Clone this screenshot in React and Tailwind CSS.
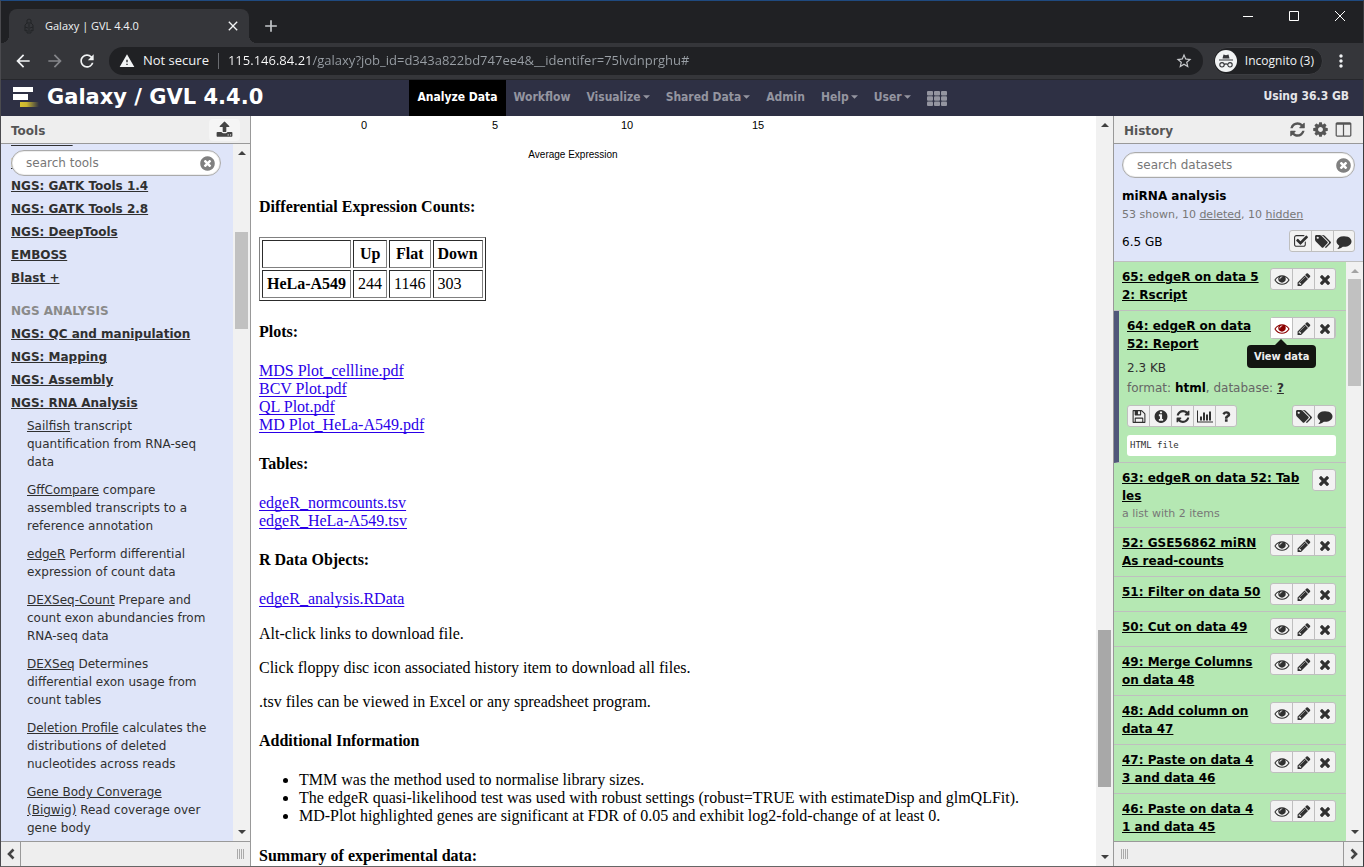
import { MdArrowBack, MdArrowForward, MdRefresh, MdStarBorder, MdMoreVert, MdWarning, MdClose, MdAdd } from "react-icons/md";

const ICONS = {
  eye: "M1664 960q-152-236-381-353 61 104 61 225 0 185-131.5 316.5t-316.5 131.5-316.5-131.5-131.5-316.5q0-121 61-225-229 117-381 353 133 205 333.5 326.5t434.5 121.5 434.5-121.5 333.5-326.5zm-720-384q0-20-14-34t-34-14q-125 0-214.5 89.5t-89.5 214.5q0 20 14 34t34 14 34-14 14-34q0-86 61-147t147-61q20 0 34-14t14-34zm848 384q0 34-20 69-140 230-376.5 368.5t-499.5 138.5-499.5-139-376.5-368q-20-35-20-69t20-69q140-229 376.5-368t499.5-139 499.5 139 376.5 368q20 35 20 69z",
  pencil: "M491 1536l91-91-235-235-91 91v107h128v128h107zm523-928q0-22-22-22-10 0-17 7l-542 542q-7 7-7 17 0 22 22 22 10 0 17-7l542-542q7-7 7-17zm-54-192l416 416-832 832h-416v-416zm683 96q0 53-37 90l-166 166-416-416 166-165q36-38 90-38 53 0 91 38l235 234q37 39 37 91z",
  times: "M1490 1322q0 40-28 68l-136 136q-28 28-68 28t-68-28l-294-294-294 294q-28 28-68 28t-68-28l-136-136q-28-28-28-68t28-68l294-294-294-294q-28-28-28-68t28-68l136-136q28-28 68-28t68 28l294 294 294-294q28-28 68-28t68 28l136 136q28 28 28 68t-28 68l-294 294 294 294q28 28 28 68z",
  refresh: "M1639 1056q0 5-1 7-64 268-268 434.5t-478 166.5q-146 0-282.5-55t-243.5-157l-129 129q-19 19-45 19t-45-19-19-45v-448q0-26 19-45t45-19h448q26 0 45 19t19 45-19 45l-137 137q71 66 161 102t187 36q134 0 250-65t186-179q11-17 53-117 8-23 30-23h192q13 0 22.5 9.5t9.5 22.5zm25-800v448q0 26-19 45t-45 19h-448q-26 0-45-19t-19-45 19-45l138-138q-148-137-349-137-134 0-250 65t-186 179q-11 17-53 117-8 23-30 23h-199q-13 0-22.5-9.5t-9.5-22.5v-7q65-268 270-434.5t480-166.5q146 0 284 55.5t245 156.5l130-129q19-19 45-19t45 19 19 45z",
  cog: "M1152 896q0-106-75-181t-181-75-181 75-75 181 75 181 181 75 181-75 75-181zm512-109v222q0 12-8 23t-20 13l-185 28q-19 54-39 91 35 50 107 138 10 12 10 25t-9 23q-27 37-99 108t-94 71q-12 0-26-9l-138-108q-44 23-91 38-16 136-29 186-7 28-36 28h-222q-14 0-24.5-8.5t-11.5-21.5l-28-184q-49-16-90-37l-141 107q-10 9-25 9-14 0-25-11-126-114-165-168-7-10-7-23 0-12 8-23 15-21 51-66.5t54-70.5q-27-50-41-99l-183-27q-13-2-21-12.5t-8-23.5v-222q0-12 8-23t19-13l186-28q14-46 39-92-40-57-107-138-10-12-10-24 0-10 9-23 26-36 98.5-107.5t94.5-71.5q13 0 26 10l138 107q44-23 91-38 16-136 29-186 7-28 36-28h222q14 0 24.5 8.5t11.5 21.5l28 184q49 16 90 37l142-107q9-9 24-9 13 0 25 10 129 119 165 170 7 8 7 22 0 12-8 23-15 21-51 66.5t-54 70.5q26 50 41 98l183 28q13 2 21 12.5t8 23.5z",
  columns: "M224 1536h608v-1152h-640v1120q0 13 9.5 22.5t22.5 9.5zm1376-32v-1120h-640v1152h608q13 0 22.5-9.5t9.5-22.5zm128-1216v1216q0 66-47 113t-113 47h-1344q-66 0-113-47t-47-113v-1216q0-66 47-113t113-47h1344q66 0 113 47t47 113z",
  tags: "M448 448q0-53-37.5-90.5t-90.5-37.5-90.5 37.5-37.5 90.5 37.5 90.5 90.5 37.5 90.5-37.5 37.5-90.5zm1067 576q0 53-37 90l-491 492q-39 37-91 37-53 0-90-37l-715-716q-38-37-64.5-101t-26.5-117v-416q0-52 38-90t90-38h416q53 0 117 26.5t102 64.5l715 714q37 39 37 91zm384 0q0 53-37 90l-491 492q-39 37-91 37-36 0-59-14t-53-45l470-470q37-37 37-90 0-52-37-91l-715-714q-38-38-102-64.5t-117-26.5h224q53 0 117 26.5t102 64.5l715 714q37 39 37 91z",
  comment: "M1792 896q0 174-120 321.5t-326 233-450 85.5q-70 0-145-8-198 175-460 242-49 14-114 22-17 2-30.5-9t-17.5-29v-1q-3-4-.5-12t2-10 4.5-9.5l6-9 7-8.5 8-9q7-8 31-34.5t34.5-38 31-39.5 32.5-51 27-59 26-76q-157-89-247.5-220t-90.5-281q0-130 71-248.5t191-204.5 286-136.5 348-50.5q244 0 450 85.5t326 233 120 321.5z",
  check: "M1472 930v318q0 119-84.5 203.5t-203.5 84.5h-832q-119 0-203.5-84.5t-84.5-203.5v-832q0-119 84.5-203.5t203.5-84.5h832q63 0 117 25 15 7 18 23 3 17-9 29l-49 49q-10 10-23 10-3 0-9-2-23-6-45-6h-832q-66 0-113 47t-47 113v832q0 66 47 113t113 47h832q66 0 113-47t47-113v-254q0-13 9-22l64-64q10-10 23-10 6 0 12 3 20 8 20 29zm231-489l-814 814q-24 24-57 24t-57-24l-430-430q-24-24-24-57t24-57l110-110q24-24 57-24t57 24l263 263 647-647q24-24 57-24t57 24l110 110q24 24 24 57t-24 57z",
  save: "M512 1536h768v-384h-768v384zm896 0h128v-896q0-14-10-38.5t-20-34.5l-281-281q-10-10-34-20t-39-10v416q0 40-28 68t-68 28h-576q-40 0-68-28t-28-68v-416h-128v1280h128v-416q0-40 28-68t68-28h832q40 0 68 28t28 68v416zm-384-928v-320q0-13-9.5-22.5t-22.5-9.5h-192q-13 0-22.5 9.5t-9.5 22.5v320q0 13 9.5 22.5t22.5 9.5h192q13 0 22.5-9.5t9.5-22.5zm640 32v928q0 40-28 68t-68 28h-1344q-40 0-68-28t-28-68v-1344q0-40 28-68t68-28h928q40 0 88 20t76 48l280 280q28 28 48 76t20 88z",
  info: "M1152 1376v-160q0-14-9-23t-23-9h-96v-512q0-14-9-23t-23-9h-320q-14 0-23 9t-9 23v160q0 14 9 23t23 9h96v320h-96q-14 0-23 9t-9 23v160q0 14 9 23t23 9h448q14 0 23-9t9-23zm-128-896v-160q0-14-9-23t-23-9h-192q-14 0-23 9t-9 23v160q0 14 9 23t23 9h192q14 0 23-9t9-23zm640 416q0 209-103 385.5t-279.5 279.5-385.5 103-385.5-103-279.5-279.5-103-385.5 103-385.5 279.5-279.5 385.5-103 385.5 103 279.5 279.5 103 385.5z",
  chart: "M640 896v512h-256v-512h256zm384-512v1024h-256v-1024h256zm1024 1152v128h-2048v-1536h128v1408h1920zm-640-896v768h-256v-768h256zm384-384v1152h-256v-1152h256z",
  question: "M1088 1256v240q0 16-12 28t-28 12h-240q-16 0-28-12t-12-28v-240q0-16 12-28t28-12h240q16 0 28 12t12 28zm316-600q0 54-15.5 101t-35 76.5-55 59.5-57.5 43.5-61 35.5q-41 23-68.5 65t-27.5 67q0 17-12 32.5t-28 15.5h-240q-15 0-25.5-18.5t-10.5-37.5v-45q0-83 65-156.5t143-108.5q59-27 84-56t25-76q0-42-46.5-74t-107.5-32q-65 0-108 29-35 25-107 115-13 16-31 16-12 0-25-8l-164-125q-13-10-15.5-25t5.5-28q160-266 464-266 80 0 161 31t146 83 106 127.5 41 158.5z",
  upload: "M1344 1472q0-26-19-45t-45-19-45 19-19 45 19 45 45 19 45-19 19-45zm256 0q0-26-19-45t-45-19-45 19-19 45 19 45 45 19 45-19 19-45zm128-224v320q0 40-28 68t-68 28h-1472q-40 0-68-28t-28-68v-320q0-40 28-68t68-28h427q21 56 70.5 92t110.5 36h256q61 0 110.5-36t70.5-92h427q40 0 68 28t28 68zm-325-648q-17 40-59 40h-256v448q0 26-19 45t-45 19h-256q-26 0-45-19t-19-45v-448h-256q-42 0-59-40-17-39 14-69l448-448q18-19 45-19t45 19l448 448q31 30 14 69z",
  clear: "M1277 1122q0-26-19-45l-181-181 181-181q19-19 19-45 0-27-19-46l-90-90q-19-19-46-19-26 0-45 19l-181 181-181-181q-19-19-45-19-27 0-46 19l-90 90q-19 19-19 46 0 26 19 45l181 181-181 181q-19 19-19 45 0 27 19 46l90 90q19 19 46 19 26 0 45-19l181-181 181 181q19 19 45 19 27 0 46-19l90-90q19-19 19-46zm387-226q0 209-103 385.5t-279.5 279.5-385.5 103-385.5-103-279.5-279.5-103-385.5 103-385.5 279.5-279.5 385.5-103 385.5 103 279.5 279.5 103 385.5z",
};

const WIDE = { tags: "0 0 1900 1792", chart: "0 0 2048 1792" };

function Icon({ name, className = "size-4" }) {
  return (
    <svg viewBox={WIDE[name] || "0 0 1792 1792"} className={className} fill="currentColor" aria-hidden="true">
      <path d={ICONS[name]} />
    </svg>
  );
}

function IconGroup({ items, children }) {
  return (
    <div className="relative flex h-[22px] shrink-0 self-start divide-x divide-[#bfbfbf] rounded-[3px] border border-[#bfbfbf] bg-[#f2f2f2] text-[#303030]">
      {items.map(([icon, label, tone]) => (
        <button
          key={label}
          type="button"
          aria-label={label}
          className={`flex w-[22px] items-center justify-center ${items.length === 1 ? "w-5" : "last-of-type:w-5"} ${tone || ""}`}
        >
          <Icon name={icon} className="h-[15px] w-4 shrink-0" />
        </button>
      ))}
      {children}
    </div>
  );
}

function Triangle({ up, className = "h-1 w-2 fill-[#404040]" }) {
  return (
    <svg viewBox="0 0 8 4" className={`shrink-0 ${className}`} aria-hidden="true">
      <path d={up ? "M0 4 4 0 8 4Z" : "M0 0 4 4 8 0Z"} />
    </svg>
  );
}

function Scrollbar({ before, size, after, thumb = "bg-[#c1c1c1]", upTone }) {
  return (
    <div className="flex w-[17px] shrink-0 flex-col items-center justify-between bg-[#f1f1f1] py-[7px]">
      <Triangle up className={upTone} />
      <div className="flex w-[13px] flex-1 flex-col py-[6px]">
        <div style={{ flexGrow: before }} />
        <div className={thumb} style={{ flexGrow: size }} />
        <div style={{ flexGrow: after }} />
      </div>
      <Triangle />
    </div>
  );
}

function SearchBox({ id, label, end = "pr-1" }) {
  return (
    <div className={`flex h-[26px] items-center rounded-full border border-[#aaa] bg-white pl-3.5 shadow-[inset_0_0_0_1px_#eee] ${end}`}>
      <label htmlFor={id} className="sr-only">{label}</label>
      <input
        id={id}
        type="text"
        placeholder={label}
        className="min-w-0 flex-1 bg-transparent text-[12px] text-[#333] outline-none placeholder:text-[#777]"
      />
      <button type="button" aria-label={`Clear ${label}`} className="text-[#808080]">
        <Icon name="clear" className="size-[17px]" />
      </button>
    </div>
  );
}

function BrowserChrome() {
  return (
    <header className="shrink-0 font-['Open_Sans','Noto_Sans',sans-serif]">
      <div className="flex h-[42px] bg-[#202124] pl-2">
        <div className="relative mt-2 flex w-60 items-center rounded-t-lg bg-[#35363a] pr-2 pl-3 text-[#f1f3f4]">
          <span className="absolute bottom-0 -left-2 size-2 bg-[radial-gradient(circle_at_top_left,transparent_8px,#35363a_8px)]" />
          <span className="absolute -right-2 bottom-0 size-2 bg-[radial-gradient(circle_at_top_right,transparent_8px,#35363a_8px)]" />
          <svg viewBox="0 0 16 16" className="mr-2 size-4 fill-none stroke-[#232427]" aria-hidden="true">
            <path d="M6 5V2l2-1 2 1v3l2 2v6l-2-1v3H6v-3l-2 1V7ZM6 5h4M8 6v8M4 9l3 1M12 9l-3 1" />
          </svg>
          <span className="flex-1 text-[11px]">Galaxy | GVL 4.4.0</span>
          <button type="button" aria-label="Close tab"><MdClose className="size-4" /></button>
        </div>
        <button type="button" aria-label="New tab" className="mt-2 ml-3 text-[#c4c7ca]"><MdAdd className="size-5" /></button>
        <div className="ml-auto flex h-[29px] items-center text-white">
          <button type="button" aria-label="Minimize" className="flex w-[46px] justify-center">
            <svg viewBox="0 0 10 10" className="size-2.5 stroke-current"><path d="M0 5.5h10" /></svg>
          </button>
          <button type="button" aria-label="Maximize" className="flex w-[46px] justify-center">
            <svg viewBox="0 0 10 10" className="size-2.5 fill-none stroke-current"><path d="M.5.5h9v9h-9Z" /></svg>
          </button>
          <button type="button" aria-label="Close" className="flex w-[46px] justify-center">
            <svg viewBox="0 0 10 10" className="size-2.5 fill-none stroke-current"><path d="m0 0 10 10M10 0 0 10" /></svg>
          </button>
        </div>
      </div>
      <div className="flex h-9 items-center bg-[#35363a] px-3 text-[#f1f3f4]">
        <button type="button" aria-label="Back"><MdArrowBack className="size-5" /></button>
        <button type="button" aria-label="Forward" className="ml-3 text-[#85868a]"><MdArrowForward className="size-5" /></button>
        <button type="button" aria-label="Reload" className="ml-3"><MdRefresh className="size-5" /></button>
        <div className="ml-3 flex h-7 flex-1 items-center rounded-full bg-[#202124] px-2.5 text-[13px]">
          <MdWarning className="size-4" />
          <span className="ml-2">Not secure</span>
          <span className="mx-[9px] h-4 w-px bg-[#6a6c70]" />
          <label htmlFor="address" className="sr-only">Address</label>
          <input
            id="address"
            type="text"
            spellCheck="false"
            defaultValue="115.146.84.21/galaxy?job_id=d343a822bd747ee4&__identifer=75lvdnprghu#"
            className="min-w-0 flex-1 bg-[linear-gradient(to_right,#fff_84px,#9aa0a6_84px)] bg-clip-text text-transparent outline-none"
          />
          <button type="button" aria-label="Bookmark" className="text-[#c8cacd]"><MdStarBorder className="size-[18px]" /></button>
        </div>
        <button type="button" className="ml-2.5 flex h-7 items-center gap-2 rounded-full border border-[#3c3d41] bg-[#202124] pr-2 pl-px text-[12px]">
          <svg viewBox="0 0 22 22" className="size-[22px]" aria-hidden="true">
            <circle cx="11" cy="11" r="11" fill="#f1f3f4" />
            <path d="M7.5 8.5 8.5 4.6l2.5.6 2.5-.6 1 3.9ZM4 9.5h14v1H4Z" fill="#35363a" />
            <path d="M9.2 14.8a2.2 2.2 0 1 1-4.4 0 2.2 2.2 0 0 1 4.4 0ZM17.2 14.8a2.2 2.2 0 1 1-4.4 0 2.2 2.2 0 0 1 4.4 0ZM9.2 14.4q1.8-1 3.6 0" fill="none" stroke="#35363a" strokeWidth="1.1" />
          </svg>
          Incognito (3)
        </button>
        <button type="button" aria-label="Menu" className="ml-2"><MdMoreVert className="size-5" /></button>
      </div>
      <div className="h-px bg-[#26272b]" />
    </header>
  );
}

const NAV = [
  ["Analyze Data", false],
  ["Workflow", false],
  ["Visualize", true],
  ["Shared Data", true],
  ["Admin", false],
  ["Help", true],
  ["User", true],
];

function Masthead() {
  return (
    <div className="grid h-9 shrink-0 grid-cols-[1fr_auto_1fr] bg-[#2e3044] text-[12px] font-bold">
      <div className="flex items-center gap-2 pb-0.5 pl-3">
        <svg viewBox="0 0 26 22" className="h-[22px] w-[26px]" aria-hidden="true">
          <defs>
            <linearGradient id="brand" x1="0" x2="1">
              <stop offset="0" stopColor="#d8c32f" />
              <stop offset=".35" stopColor="#c9b631" />
              <stop offset="1" stopColor="#2e3044" />
            </linearGradient>
          </defs>
          <path d="M0 1h20v5H0ZM0 8h15v6H0Z" fill="#fff" />
          <path d="M7 16h19v5H7Z" fill="url(#brand)" />
        </svg>
        <span className="text-[21px] leading-8 text-white">Galaxy / GVL 4.4.0</span>
      </div>
      <nav className="flex font-['DejaVu_Sans_Condensed','DejaVu_Sans',sans-serif] text-[#9495a0]">
        {NAV.map(([label, menu]) => (
          <a
            key={label}
            href="#"
            className={`flex items-center gap-0.5 px-2 pb-0.5 ${label === "Analyze Data" ? "bg-black text-white" : ""}`}
          >
            {label}
            {menu && <Triangle className="h-1 w-[7px] fill-[#9495a0]" />}
          </a>
        ))}
        <button type="button" aria-label="Apps" className="px-2">
          <svg viewBox="0 0 20 15" className="h-[15px] w-5 fill-[#9495a0]" aria-hidden="true">
            {[0, 7, 14].map((x) => [0, 5.3, 10.6].map((y) => (
              <rect key={`${x}-${y}`} x={x} y={y} width="6" height="4.4" rx="1" />
            )))}
          </svg>
        </button>
      </nav>
      <span className="self-center justify-self-end pr-3.5 pb-1 font-['DejaVu_Sans_Condensed','DejaVu_Sans',sans-serif] text-[#e6e6ea]">
        Using 36.3 GB
      </span>
    </div>
  );
}

const SECTIONS = ["BEDTools", "NGS: Picard", "NGS: GATK Tools 1.4", "NGS: GATK Tools 2.8", "NGS: DeepTools", "EMBOSS", "Blast +"];
const ANALYSIS = ["NGS: QC and manipulation", "NGS: Mapping", "NGS: Assembly", "NGS: RNA Analysis"];
const TOOLS = [
  ["Sailfish", "transcript quantification from RNA-seq data"],
  ["GffCompare", "compare assembled transcripts to a reference annotation"],
  ["edgeR", "Perform differential expression of count data"],
  ["DEXSeq-Count", "Prepare and count exon abundancies from RNA-seq data"],
  ["DEXSeq", "Determines differential exon usage from count tables"],
  ["Deletion Profile", "calculates the distributions of deleted nucleotides across reads"],
  ["Gene Body Converage (Bigwig)", "Read coverage over gene body"],
];

function Grip() {
  return <div className="flex h-[10px] w-[7px] justify-between">{[0, 1, 2, 3].map((i) => <span key={i} className="w-px bg-[#aaa]" />)}</div>;
}

function Chevron({ left }) {
  return (
    <svg viewBox="0 0 8 12" className="h-3 w-2 fill-none stroke-[#444] stroke-[2.6]" aria-hidden="true">
      <path d={left ? "M6.5 1.5 2 6l4.5 4.5" : "M1.5 1.5 6 6l-4.5 4.5"} />
    </svg>
  );
}

function ToolSection({ label }) {
  return <li className="pb-[5px]"><a href="#" className="font-bold underline">{label}</a></li>;
}

function ToolPanel() {
  return (
    <aside className="flex w-[250px] shrink-0 flex-col border-r border-[#999] bg-[#dfe5f9]">
      <div className="flex h-7 shrink-0 items-center justify-between border-b border-[#999] bg-[#eee] px-2.5">
        <h2 className="pt-0.5 text-[12px] font-bold text-[#555]">Tools</h2>
        <button type="button" aria-label="Upload data" className="flex h-[22px] w-[31px] items-center justify-center rounded bg-[#f5f5f5] text-[#444]">
          <Icon name="upload" className="size-[17px]" />
        </button>
      </div>
      <div className="flex min-h-0 flex-1">
        <div className="relative min-w-0 flex-1 overflow-hidden pl-2.5 text-[12px] leading-[18px] text-[#303030]">
          <ul className="-mt-[13px]">
            {SECTIONS.map((label) => <ToolSection key={label} label={label} />)}
          </ul>
          <h3 className="pt-[10px] pb-[5px] font-bold text-[#8a8a8a]">NGS ANALYSIS</h3>
          <ul>
            {ANALYSIS.map((label) => <ToolSection key={label} label={label} />)}
          </ul>
          <ul className="flex flex-col gap-2.5 pl-4">
            {TOOLS.map(([name, text]) => (
              <li key={name} className="max-w-[184px]"><a href="#" className="underline">{name}</a> {text}</li>
            ))}
          </ul>
          <div className="absolute top-1.5 right-3 left-2.5">
            <SearchBox id="search-tools" label="search tools" />
          </div>
        </div>
        <Scrollbar before={71} size={97} after={495} />
      </div>
      <div className="flex h-[25px] shrink-0 items-center justify-between border-t border-[#999] bg-[#eee] pr-[6px]">
        <button type="button" aria-label="Collapse tools" className="flex h-full w-5 items-center justify-center border-r border-[#999]"><Chevron left /></button>
        <Grip />
      </div>
    </aside>
  );
}

function Heading({ children }) {
  return <h4 className="my-[21px] font-bold">{children}</h4>;
}

function Links({ items }) {
  return (
    <p className="flex flex-col items-start">
      {items.map((item) => (
        <a key={item} href="#" className="text-[#2a00e8] underline decoration-1 underline-offset-2 [text-decoration-skip-ink:none]">{item}</a>
      ))}
    </p>
  );
}

function Report() {
  const cell = "border border-t-[#2c2c2c] border-r-[#808080] border-b-[#808080] border-l-[#2c2c2c] p-1";
  return (
    <main className="flex min-w-0 flex-1">
      <div className="min-w-0 flex-1 overflow-hidden bg-white px-2 font-['Liberation_Serif',serif] text-[16px] leading-[18px] text-black">
        <svg viewBox="0 0 600 61" className="h-[61px] w-[600px]" textAnchor="middle" fontSize="11" fontFamily="Liberation Sans, Arial, sans-serif" role="img" aria-label="Average Expression axis">
          <text x="105" y="13">0</text>
          <text x="236" y="13">5</text>
          <text x="368" y="13">10</text>
          <text x="499" y="13">15</text>
          <text x="314" y="42" fontSize="10">Average Expression</text>
        </svg>
        <Heading>Differential Expression Counts:</Heading>
        <table className="mb-[22px] border-separate border-spacing-[2px] border border-t-[#808080] border-r-[#2c2c2c] border-b-[#2c2c2c] border-l-[#808080]">
          <thead>
            <tr>
              <td className={cell} />
              {["Up", "Flat", "Down"].map((h) => <th key={h} scope="col" className={cell}>{h}</th>)}
            </tr>
          </thead>
          <tbody>
            <tr>
              <th scope="row" className={cell}>HeLa-A549</th>
              {["244", "1146", "303"].map((v) => <td key={v} className={cell}>{v}</td>)}
            </tr>
          </tbody>
        </table>
        <Heading>Plots:</Heading>
        <Links items={["MDS Plot_cellline.pdf", "BCV Plot.pdf", "QL Plot.pdf", "MD Plot_HeLa-A549.pdf"]} />
        <Heading>Tables:</Heading>
        <Links items={["edgeR_normcounts.tsv", "edgeR_HeLa-A549.tsv"]} />
        <Heading>R Data Objects:</Heading>
        <Links items={["edgeR_analysis.RData"]} />
        <div className="mt-[17px] mb-[21px] flex flex-col gap-4">
          <p>Alt-click links to download file.</p>
          <p>Click floppy disc icon associated history item to download all files.</p>
          <p>.tsv files can be viewed in Excel or any spreadsheet program.</p>
        </div>
        <Heading>Additional Information</Heading>
        <ul className="mb-[22px] list-disc pl-10">
          <li>TMM was the method used to normalise library sizes.</li>
          <li>The edgeR quasi-likelihood test was used with robust settings (robust=TRUE with estimateDisp and glmQLFit).</li>
          <li>MD-Plot highlighted genes are significant at FDR of 0.05 and exhibit log2-fold-change of at least 0.</li>
        </ul>
        <Heading>Summary of experimental data:</Heading>
      </div>
      <Scrollbar before={493} size={156} after={61} thumb="bg-[#a8a8a8]" />
    </main>
  );
}

const ACTIONS = [["eye", "View data"], ["pencil", "Edit attributes"], ["times", "Delete"]];

function Title({ lines }) {
  return (
    <a href="#" className="font-bold whitespace-nowrap text-black underline">
      {lines[0]}
      {lines[1] && <><br />{lines[1]}</>}
    </a>
  );
}

function HistoryItem({ lines, actions = ACTIONS, note }) {
  return (
    <li className="flex justify-between border-b border-[#bfbfbf] py-1.5 pr-2.5 pl-2">
      <div>
        <Title lines={lines} />
        {note && <p className="pt-px text-[11px] leading-[15px] text-[#777]">{note}</p>}
      </div>
      <IconGroup items={actions} />
    </li>
  );
}

function ExpandedItem() {
  return (
    <li className="border-b border-l-5 border-b-[#bfbfbf] border-l-[#51577a] py-1.5 pr-2.5 pl-2">
      <div className="flex justify-between">
        <Title lines={["64: edgeR on data", "52: Report"]} />
        <IconGroup items={[["eye", "View data", "bg-white text-[#8b0000]"], ACTIONS[1], ACTIONS[2]]}>
          <div role="tooltip" className="absolute top-[27px] -left-6 rounded bg-[#121511] px-[7px] py-0.5 font-['DejaVu_Sans_Condensed','DejaVu_Sans',sans-serif] text-[11px] leading-[19px] font-bold whitespace-nowrap text-[#eee]">
            <svg viewBox="0 0 12 6" className="absolute -top-1.5 left-7 h-1.5 w-3 fill-[#121511]" aria-hidden="true"><path d="M0 6 6 0l6 6Z" /></svg>
            View data
          </div>
        </IconGroup>
      </div>
      <p className="mt-1.5 text-[#303030]">2.3 KB</p>
      <p className="mt-0.5 text-[#666]">
        format: <b className="text-black">html</b>, database: <a href="#" className="font-bold text-[#303030] underline">?</a>
      </p>
      <div className="mt-2 flex justify-between">
        <IconGroup items={[["save", "Download"], ["info", "View details"], ["refresh", "Run this job again"], ["chart", "Visualize"], ["question", "Help"]]} />
        <IconGroup items={[["tags", "Edit dataset tags"], ["comment", "Edit dataset annotation"]]} />
      </div>
      <pre className="mt-2 rounded-[3px] bg-white px-[3px] font-['DejaVu_Sans_Mono',monospace] text-[9px] leading-[21px] text-[#303030]">HTML file</pre>
    </li>
  );
}

function HistoryPanel() {
  return (
    <aside className="flex w-[250px] shrink-0 flex-col border-l border-[#999] bg-[#dfe5f9] text-[12px] leading-[18px]">
      <div className="flex h-7 shrink-0 items-center gap-1.5 border-b border-[#999] bg-[#eee] pr-[11px] pl-2.5 text-[#555]">
        <h2 className="flex-1 pt-0.5 font-bold">History</h2>
        <button type="button" aria-label="Refresh history"><Icon name="refresh" className="size-[17px]" /></button>
        <button type="button" aria-label="History options"><Icon name="cog" className="size-[17px]" /></button>
        <button type="button" aria-label="View all histories"><Icon name="columns" className="size-[17px]" /></button>
      </div>
      <div className="shrink-0 border-b border-[#bfbfbf] px-2 pt-2 pb-[9px]">
        <SearchBox id="search-datasets" label="search datasets" end="pr-0.5" />
        <h3 className="mt-[9px] font-bold text-black">miRNA analysis</h3>
        <p className="mt-px text-[11px] text-[#777]">
          53 shown, 10 <a href="#" className="underline">deleted</a>, 10 <a href="#" className="underline">hidden</a>
        </p>
        <div className="mt-1.5 flex items-center justify-between text-black">
          <span className="pt-0.5">6.5 GB</span>
          <IconGroup items={[["check", "Operations on multiple datasets"], ["tags", "Edit history tags"], ["comment", "Edit history annotation"]]} />
        </div>
      </div>
      <div className="flex min-h-0 flex-1">
        <ul className="min-w-0 flex-1 overflow-hidden bg-[#b5e8b3]">
          <HistoryItem lines={["65: edgeR on data 5", "2: Rscript"]} />
          <ExpandedItem />
          <HistoryItem lines={["63: edgeR on data 52: Tab", "les"]} note="a list with 2 items" actions={[["times", "Delete"]]} />
          <HistoryItem lines={["52: GSE56862 miRN", "As read-counts"]} />
          <HistoryItem lines={["51: Filter on data 50"]} />
          <HistoryItem lines={["50: Cut on data 49"]} />
          <HistoryItem lines={["49: Merge Columns", "on data 48"]} />
          <HistoryItem lines={["48: Add column on", "data 47"]} />
          <HistoryItem lines={["47: Paste on data 4", "3 and data 46"]} />
          <HistoryItem lines={["46: Paste on data 4", "1 and data 45"]} />
        </ul>
        <Scrollbar before={0} size={107} after={438} upTone="h-1 w-2 fill-[#a3a3a3]" />
      </div>
      <div className="flex h-[25px] shrink-0 items-center justify-between border-t border-[#999] bg-[#eee] pl-[7px]">
        <Grip />
        <button type="button" aria-label="Collapse history" className="flex h-full w-5 items-center justify-center border-l border-[#999]"><Chevron /></button>
      </div>
    </aside>
  );
}

export default function App() {
  return (
    <div className="flex h-screen flex-col overflow-hidden border border-t-[#1f4a80] border-r-[#3a3a3e] border-b-[#666] border-l-[#4a4a4e] bg-white font-['DejaVu_Sans',Verdana,sans-serif]">
      <BrowserChrome />
      <Masthead />
      <div className="flex min-h-0 flex-1">
        <ToolPanel />
        <Report />
        <HistoryPanel />
      </div>
    </div>
  );
}
